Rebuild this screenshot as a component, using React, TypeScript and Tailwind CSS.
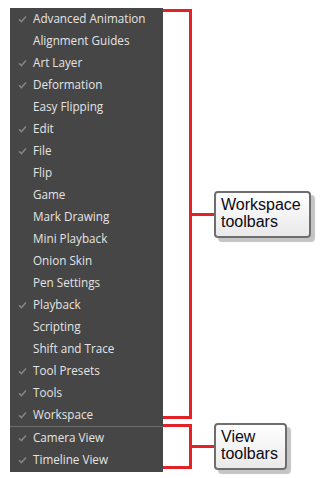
const workspace = [
  { label: 'Advanced Animation', checked: true },
  { label: 'Alignment Guides', checked: false },
  { label: 'Art Layer', checked: true },
  { label: 'Deformation', checked: true },
  { label: 'Easy Flipping', checked: false },
  { label: 'Edit', checked: true },
  { label: 'File', checked: true },
  { label: 'Flip', checked: false },
  { label: 'Game', checked: false },
  { label: 'Mark Drawing', checked: false },
  { label: 'Mini Playback', checked: false },
  { label: 'Onion Skin', checked: false },
  { label: 'Pen Settings', checked: false },
  { label: 'Playback', checked: true },
  { label: 'Scripting', checked: false },
  { label: 'Shift and Trace', checked: false },
  { label: 'Tool Presets', checked: true },
  { label: 'Tools', checked: true },
  { label: 'Workspace', checked: true },
]

const views = [
  { label: 'Camera View', checked: true },
  { label: 'Timeline View', checked: true },
]

function Check() {
  return (
    <svg width="9" height="8" viewBox="0 0 9 8" className="block">
      <path d="M1 4.2 L3.4 6.6 L8 1.4" fill="none" stroke="#858585" strokeWidth="1.5" />
    </svg>
  )
}

function Row({ label, checked }: { label: string; checked: boolean }) {
  return (
    <div className="flex h-[22px] items-center">
      <div className="flex w-[23px] justify-center pl-[2px]">{checked && <Check />}</div>
      <span className="text-[11.7px] text-[#e4e4e4]">{label}</span>
    </div>
  )
}

function Callout({ lines, width }: { lines: string[]; width: string }) {
  return (
    <div
      className={`${width} h-[47px] rounded-[4px] border-2 border-[#6e6e6e] bg-gradient-to-b from-white to-[#e9e9e9] px-[5px] pt-[3px] shadow-[4px_4px_1px_#c4c4c4] font-['Liberation_Sans',Arial,sans-serif] text-[16px] leading-[17px] text-[#0a0a14]`}
    >
      {lines.map((l) => (
        <div key={l}>{l}</div>
      ))}
    </div>
  )
}

export default function App() {
  return (
    <main className="flex h-[478px] w-[324px] items-start bg-white pl-[10px] pt-[8px] font-['Open_Sans','Noto_Sans',sans-serif]">
      {/* Toolbar menu */}
      <div className="flex w-[153px] flex-col bg-[#464646] pb-[1px]">
        {workspace.map((item) => (
          <Row key={item.label} {...item} />
        ))}
        <div className="h-px bg-[#6c6c6c]" />
        {views.map((item) => (
          <Row key={item.label} {...item} />
        ))}
      </div>

      {/* Brackets */}
      <div className="flex flex-col pt-px">
        <div className="flex items-center">
          <div className="h-[410px] w-[29px] border-y-[3px] border-r-[3px] border-[#e32228]" />
          <div className="h-[3px] w-[22px] bg-[#e32228]" />
          <Callout lines={['Workspace', 'toolbars']} width="w-[97px]" />
        </div>
        <div className="mt-[4px] flex items-center">
          <div className="h-[45px] w-[29px] border-y-[3px] border-r-[3px] border-[#e32228]" />
          <div className="h-[3px] w-[22px] bg-[#e32228]" />
          <Callout lines={['View', 'toolbars']} width="w-[73px]" />
        </div>
      </div>
    </main>
  )
}
